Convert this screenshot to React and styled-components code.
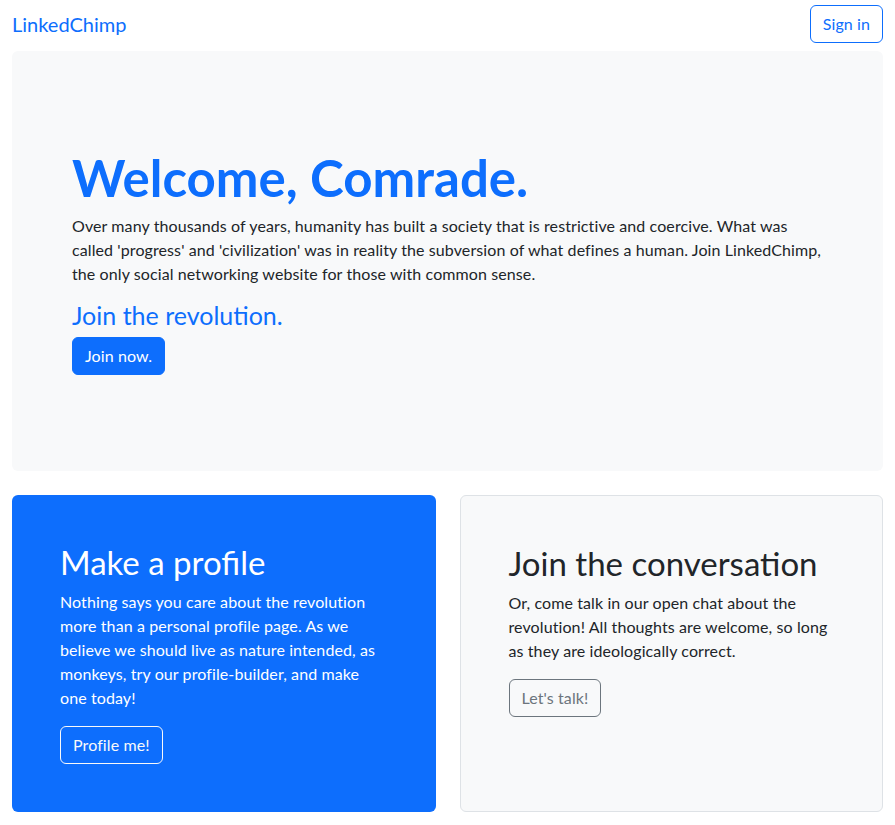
import React from "react";
import styled, { createGlobalStyle, css } from "styled-components";

const Global = createGlobalStyle`
  * { box-sizing: border-box; }
  body {
    margin: 0;
    font-family: Lato, "Open Sans", sans-serif;
    font-size: 16px;
    line-height: 1.5;
    letter-spacing: 0.1px;
    color: #212529;
    background: #fff;
  }
`;

const Page = styled.div`
  padding: 0 12px;
`;

const Header = styled.header`
  display: flex;
  align-items: center;
  justify-content: space-between;
  padding: 5px 0 8px;
`;

const Brand = styled.a`
  font-size: 20px;
  color: #0d6efd;
  text-decoration: none;
  line-height: 1.5;
  letter-spacing: 0;
`;

const Button = styled.a`
  display: inline-block;
  font-size: 16px;
  line-height: 24px;
  padding: 6px 12px;
  border-radius: 6px;
  border: 1px solid transparent;
  text-decoration: none;
  cursor: pointer;
  ${({ $variant }) =>
    $variant === "primary" &&
    css`
      background: #0d6efd;
      border-color: #0d6efd;
      color: #fff;
    `}
  ${({ $variant }) =>
    $variant === "outline-primary" &&
    css`
      border-color: #0d6efd;
      color: #0d6efd;
    `}
  ${({ $variant }) =>
    $variant === "outline-light" &&
    css`
      border-color: #f8f9fa;
      color: #f8f9fa;
    `}
  ${({ $variant }) =>
    $variant === "outline-secondary" &&
    css`
      border-color: #6c757d;
      color: #6c757d;
    `}
`;

const Jumbotron = styled.section`
  background: #f8f9fa;
  border-radius: 6px;
  padding: 99px 60px 96px;
  margin-bottom: 24px;
`;

const HeroTitle = styled.h1`
  margin: 0 0 8px;
  font-size: 51px;
  line-height: 56px;
  font-weight: 700;
  letter-spacing: 0;
  color: #0d6efd;
`;

const Lead = styled.p`
  margin: 0 0 14px;
  max-width: 751px;
`;

const SubTitle = styled.h3`
  margin: 0 0 7px;
  font-size: 25px;
  font-weight: 400;
  line-height: 1.2;
  letter-spacing: 0;
  color: #0d6efd;
`;

const Cards = styled.div`
  display: grid;
  grid-template-columns: 1fr 1fr;
  gap: 24px;
  padding-bottom: 14px;
`;

const Card = styled.div`
  border-radius: 6px;
  padding: 48px;
  ${({ $tone }) =>
    $tone === "primary"
      ? css`
          background: #0d6efd;
          color: #fff;
        `
      : css`
          background: #f8f9fa;
          color: #212529;
          border: 1px solid #dee2e6;
        `}
`;

const CardTitle = styled.h2`
  margin: 0 0 8px;
  font-size: 33px;
  font-weight: 400;
  line-height: 39px;
  letter-spacing: 0;
`;

const CardText = styled.p`
  margin: 0 0 16px;
`;

export default function App() {
  return (
    <>
      <Global />
      <Page>
        <Header>
          <Brand href="#">LinkedChimp</Brand>
          <Button $variant="outline-primary">Sign in</Button>
        </Header>
        <Jumbotron>
          <HeroTitle>Welcome, Comrade.</HeroTitle>
          <Lead>
            Over many thousands of years, humanity has built a society that is
            restrictive and coercive. What was called 'progress' and
            'civilization' was in reality the subversion of what defines a
            human. Join LinkedChimp, the only social networking website for
            those with common sense.
          </Lead>
          <SubTitle>Join the revolution.</SubTitle>
          <Button $variant="primary">Join now.</Button>
        </Jumbotron>
        <Cards>
          <Card $tone="primary">
            <CardTitle>Make a profile</CardTitle>
            <CardText>
              Nothing says you care about the revolution more than a personal
              profile page. As we believe we should live as nature intended, as
              monkeys, try our profile-builder, and make one today!
            </CardText>
            <Button $variant="outline-light">Profile me!</Button>
          </Card>
          <Card $tone="light">
            <CardTitle>Join the conversation</CardTitle>
            <CardText>
              Or, come talk in our open chat about the revolution! All thoughts
              are welcome, so long as they are ideologically correct.
            </CardText>
            <Button $variant="outline-secondary">Let's talk!</Button>
          </Card>
        </Cards>
      </Page>
    </>
  );
}
